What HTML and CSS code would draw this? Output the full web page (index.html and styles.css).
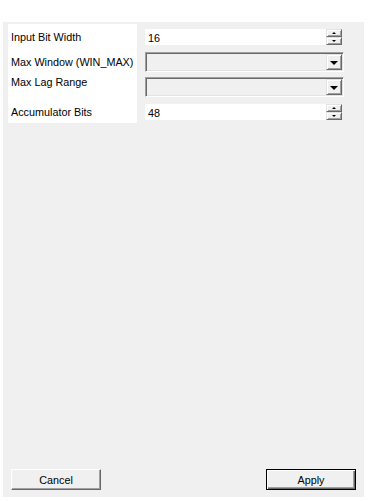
FILE: index.html
```html
<!DOCTYPE html>
<html>
<head>
<meta charset="utf-8">
<link rel="stylesheet" href="styles.css">
</head>
<body>
<div class="panel">
  <div class="form">
    <div class="labels">
      <div class="label l1">Input Bit Width</div>
      <div class="label l2">Max Window (WIN_MAX)</div>
      <div class="label l3">Max Lag Range</div>
      <div class="label l4">Accumulator Bits</div>
    </div>
    <div class="fields">
      <div class="spin">
        <div class="spin-text">16</div>
        <div class="spin-btns">
          <div class="sb"><span class="tri-up"></span></div>
          <div class="sb"><span class="tri-down"></span></div>
        </div>
      </div>
      <div class="combo c1"><div class="combo-btn"><span class="arrow"></span></div></div>
      <div class="combo c2"><div class="combo-btn"><span class="arrow"></span></div></div>
      <div class="spin s4">
        <div class="spin-text">48</div>
        <div class="spin-btns">
          <div class="sb"><span class="tri-up"></span></div>
          <div class="sb"><span class="tri-down"></span></div>
        </div>
      </div>
    </div>
  </div>
  <div class="buttons">
    <div class="btn">Cancel</div>
    <div class="btn default">Apply</div>
  </div>
</div>
</body>
</html>
```
FILE: styles.css
```css
html, body {
  margin: 0;
  padding: 0;
  background: #ffffff;
}
body {
  font-family: "Liberation Sans", Arial, sans-serif;
  font-size: 10.8px;
  color: #000;
}
.panel {
  margin: 22px 0 0 3px;
  width: 361px;
  height: 475px;
  box-sizing: border-box;
  background: #f0f0f0;
  padding: 2px 8px 7px 5px;
  display: flex;
  flex-direction: column;
  justify-content: space-between;
}
.form {
  display: flex;
  align-items: flex-start;
}
.labels {
  width: 129px;
  height: 99px;
  background: #fff;
  padding-left: 3px;
  box-sizing: border-box;
  display: flex;
  flex-direction: column;
}
.label {
  line-height: 13px;
  white-space: nowrap;
}
.l1 { margin-top: 7px; }
.l2 { margin-top: 12px; }
.l3 { margin-top: 7px; }
.l4 { margin-top: 17px; }
.fields {
  margin-left: 8px;
  width: 199px;
  padding-top: 5px;
  display: flex;
  flex-direction: column;
}
.spin {
  display: flex;
  height: 16px;
  width: 197px;
}
.s4 { margin-top: 7px; }
.spin-text {
  flex: 1;
  background: #fff;
  padding-left: 3px;
  padding-top: 2px;
  line-height: 14px;
  box-sizing: border-box;
}
.spin-btns {
  width: 16px;
  display: flex;
  flex-direction: column;
}
.sb {
  height: 8px;
  box-sizing: border-box;
  background: #f0f0f0;
  border: 1px solid;
  border-color: #e3e3e3 #696969 #696969 #e3e3e3;
  box-shadow: inset 1px 1px 0 #fff, inset -1px -1px 0 #a0a0a0;
  display: flex;
  align-items: center;
  justify-content: center;
}
.tri-up {
  width: 0;
  height: 0;
  border-left: 2px solid transparent;
  border-right: 2px solid transparent;
  border-bottom: 2px solid #000;
}
.tri-down {
  width: 0;
  height: 0;
  border-left: 2px solid transparent;
  border-right: 2px solid transparent;
  border-top: 2px solid #000;
}
.combo {
  height: 20px;
  width: 199px;
  box-sizing: border-box;
  background: #f0f0f0;
  border: 1px solid;
  border-color: #a0a0a0 #fff #fff #a0a0a0;
  box-shadow: inset 1px 1px 0 #696969, inset -1px -1px 0 #e3e3e3;
  padding: 1px;
  display: flex;
  justify-content: flex-end;
}
.c1 { margin-top: 7px; }
.c2 { margin-top: 5px; }
.combo-btn {
  width: 16px;
  height: 16px;
  box-sizing: border-box;
  background: #f0f0f0;
  border: 1px solid;
  border-color: #e3e3e3 #696969 #696969 #e3e3e3;
  box-shadow: inset 1px 1px 0 #fff, inset -1px -1px 0 #a0a0a0;
  display: flex;
  align-items: center;
  justify-content: center;
}
.arrow {
  width: 0;
  height: 0;
  border-left: 4px solid transparent;
  border-right: 4px solid transparent;
  border-top: 4px solid #000;
  margin-top: 1px;
}
.buttons {
  display: flex;
  justify-content: space-between;
  padding-left: 3px;
}
.btn {
  width: 90px;
  height: 21px;
  box-sizing: border-box;
  background: #f0f0f0;
  border: 1px solid;
  border-color: #fff #696969 #696969 #fff;
  box-shadow: inset -1px -1px 0 #a0a0a0;
  text-align: center;
  line-height: 19px;
  padding-top: 1px;
}
.btn.default {
  border: 1px solid #000;
  box-shadow: inset 1px 1px 0 #fff, inset -1px -1px 0 #696969, inset -2px -2px 0 #a0a0a0;
}
```
